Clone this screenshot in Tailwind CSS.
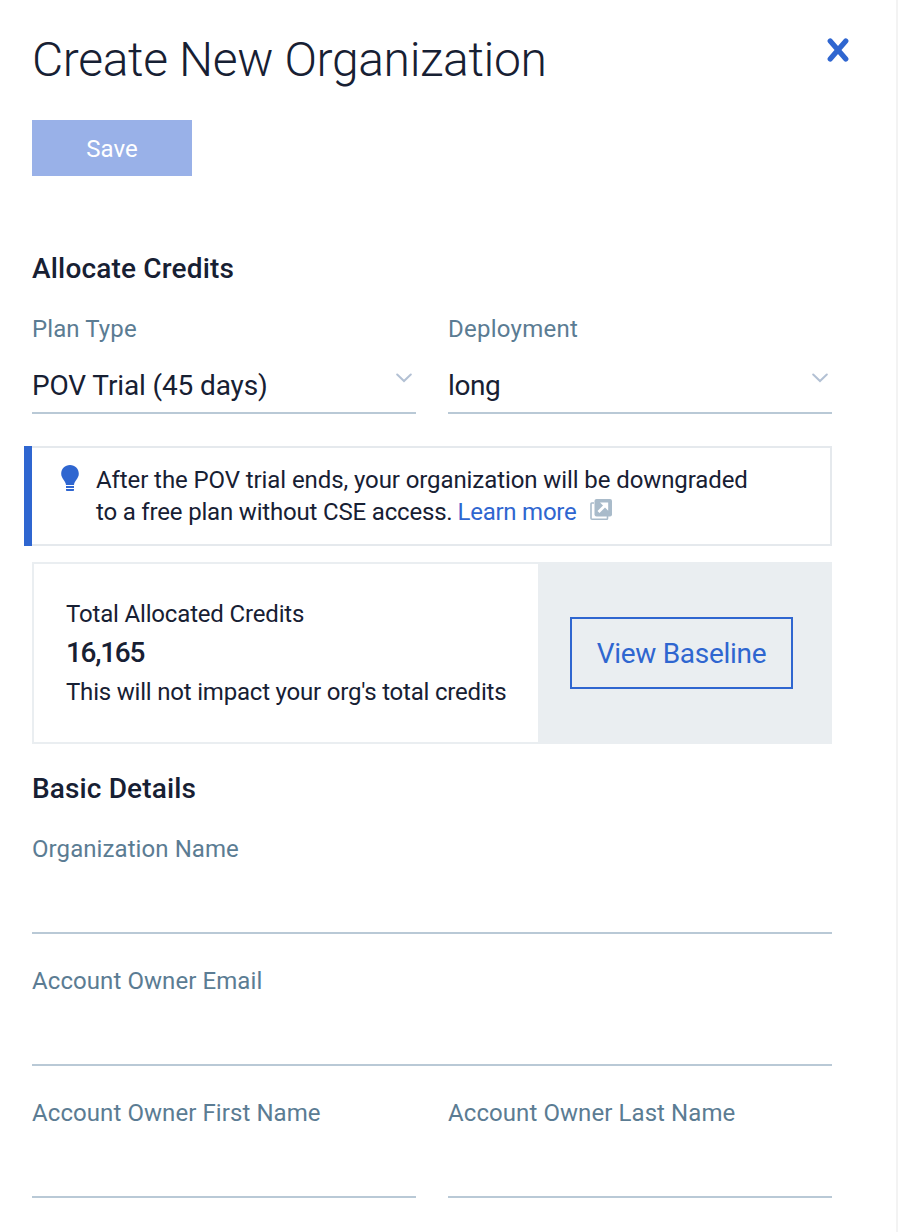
<!DOCTYPE html>
<html lang="en">
<head>
<meta charset="utf-8">
<title>Create New Organization</title>
<script src="https://cdn.jsdelivr.net/npm/@tailwindcss/browser@4"></script>
</head>
<body class="h-[1232px] overflow-hidden bg-white font-['Roboto',sans-serif] text-2xl text-[#172033]">
<main class="flex h-[1232px] flex-col border-r-2 border-[#f3f3f3] pl-8 pr-16">
  <header class="flex h-[120px] items-start justify-between">
    <h1 class="pt-7 text-[48px] leading-[64px] font-light tracking-[-0.35px] whitespace-nowrap">Create New Organization</h1>
    <button aria-label="Close" class="-mr-[18px] mt-[38px]">
      <svg class="block size-6" viewBox="0 0 24 24" fill="none" stroke="#2f66d0" stroke-width="5.2" stroke-linecap="round"><path d="M4.200 3 19.800 21M19.800 3 4.200 21"/></svg>
    </button>
  </header>
  <button class="h-14 w-40 shrink-0 bg-[#99b1e8] pt-0.5 text-white">Save</button>

  <section class="mt-[72px] flex flex-col">
    <h2 class="h-10 text-[28px] leading-[42px] font-medium tracking-[0.18px]">Allocate Credits</h2>
    <div class="mt-6 grid grid-cols-2 gap-8">
      <label class="flex h-[102px] flex-col border-b-2 border-[#b9c9d6]">
        <span class="h-9 leading-[34px] tracking-[0.1px] text-[#5b7c93]">Plan Type</span>
        <span class="mt-[18px] flex items-center justify-between text-[28px] leading-10 tracking-[-0.13px]">POV Trial (45 days)
          <svg class="mr-1 -mt-[17px] h-4 w-4" viewBox="0 0 16 16" fill="none" stroke="#b3c1d4" stroke-width="2" stroke-linecap="round"><path d="M1.200 4.500 8 11l6.800-6.500"/></svg></span>
      </label>
      <label class="flex h-[102px] flex-col border-b-2 border-[#b9c9d6]">
        <span class="h-9 leading-[34px] tracking-[0.25px] text-[#5b7c93]">Deployment</span>
        <span class="mt-[18px] flex items-center justify-between text-[28px] leading-10 tracking-[-0.4px]">long
          <svg class="mr-1 -mt-[17px] h-4 w-4" viewBox="0 0 16 16" fill="none" stroke="#b3c1d4" stroke-width="2" stroke-linecap="round"><path d="M1.200 4.500 8 11l6.800-6.500"/></svg></span>
      </label>
    </div>
  </section>

  <aside class="-ml-2 mt-8 flex h-[100px] shrink-0">
    <div class="w-2 bg-[#2f66d0]"></div>
    <div class="flex flex-1 border-2 border-l-0 border-[#e5e9ed] pt-4 pl-7">
      <svg class="mt-px h-7 w-5 shrink-0" viewBox="0 0 20 28" fill="#2f66d0"><path d="M10 0C4.900 0 1.200 3.800 1.200 8.800c0 4.700 4.300 6.700 4.800 11.200h8c.5-4.500 4.800-6.500 4.800-11.200C18.800 3.800 15.100 0 10 0Z"/><path d="M6 21h8v2H6zM6 24h8v1.200q0 .8-.8.8H6.800q-.8 0-.8-.8Z"/></svg>
      <div class="ml-4 leading-8 whitespace-nowrap">
        <p class="tracking-[-0.09px]">After the POV trial ends, your organization will be downgraded</p>
        <p class="flex tracking-[-0.18px]">to a free plan without CSE access.<a class="ml-[5px] flex tracking-[-0.25px] text-[#2f66d0]">Learn more<svg class="ml-3.5 mt-[3px] h-[22px] w-[22px]" viewBox="0 0 22 22"><path d="M4 4H1.800Q1 4 1 4.800V19.200q0 1 1 1h14.700q.8 0 .8-.8V17" fill="none" stroke="#a9bbca" stroke-width="1.600"/><rect x="4.500" width="17.500" height="17.500" rx="2" fill="#a9bbca"/><path d="M8.500 13 15 6.500" fill="none" stroke="#fff" stroke-width="2.800"/><path d="M10 3.500h8.200v8.200Z" fill="#fff"/></svg></a></p>
      </div>
    </div>
  </aside>

  <section class="mt-4 flex h-[182px] shrink-0 border-2 border-[#eaeef1]">
    <div class="flex w-[504px] flex-col pt-8 pl-8 whitespace-nowrap">
      <span class="leading-9 tracking-[-0.17px]">Total Allocated Credits</span>
      <span class="text-[28px] leading-[42px] font-medium tracking-[-1.3px]">16,165</span>
      <span class="leading-9 tracking-[-0.2px]">This will not impact your org's total credits</span>
    </div>
    <div class="flex flex-1 items-center bg-[#eaeef1] pl-8">
      <button class="h-18 w-[223px] border-2 border-[#2f66d0] pt-0.5 text-[28px] tracking-[-0.28px] text-[#2f66d0]">View Baseline</button>
    </div>
  </section>

  <section class="mt-6 flex flex-col">
    <h2 class="h-10 text-[28px] leading-[42px] font-medium tracking-[0.13px]">Basic Details</h2>
    <div class="mt-6 grid grid-cols-2 gap-x-8 gap-y-[30px] leading-[34px] tracking-[0.08px] text-[#5b7c93]">
      <label class="col-span-2 h-[102px] border-b-2 border-[#b9c9d6]">Organization Name</label>
      <label class="col-span-2 h-[102px] border-b-2 border-[#b9c9d6]">Account Owner Email</label>
      <label class="h-[102px] border-b-2 border-[#b9c9d6]">Account Owner First Name</label>
      <label class="h-[102px] border-b-2 border-[#b9c9d6]">Account Owner Last Name</label>
    </div>
  </section>
</main>
</body>
</html>
